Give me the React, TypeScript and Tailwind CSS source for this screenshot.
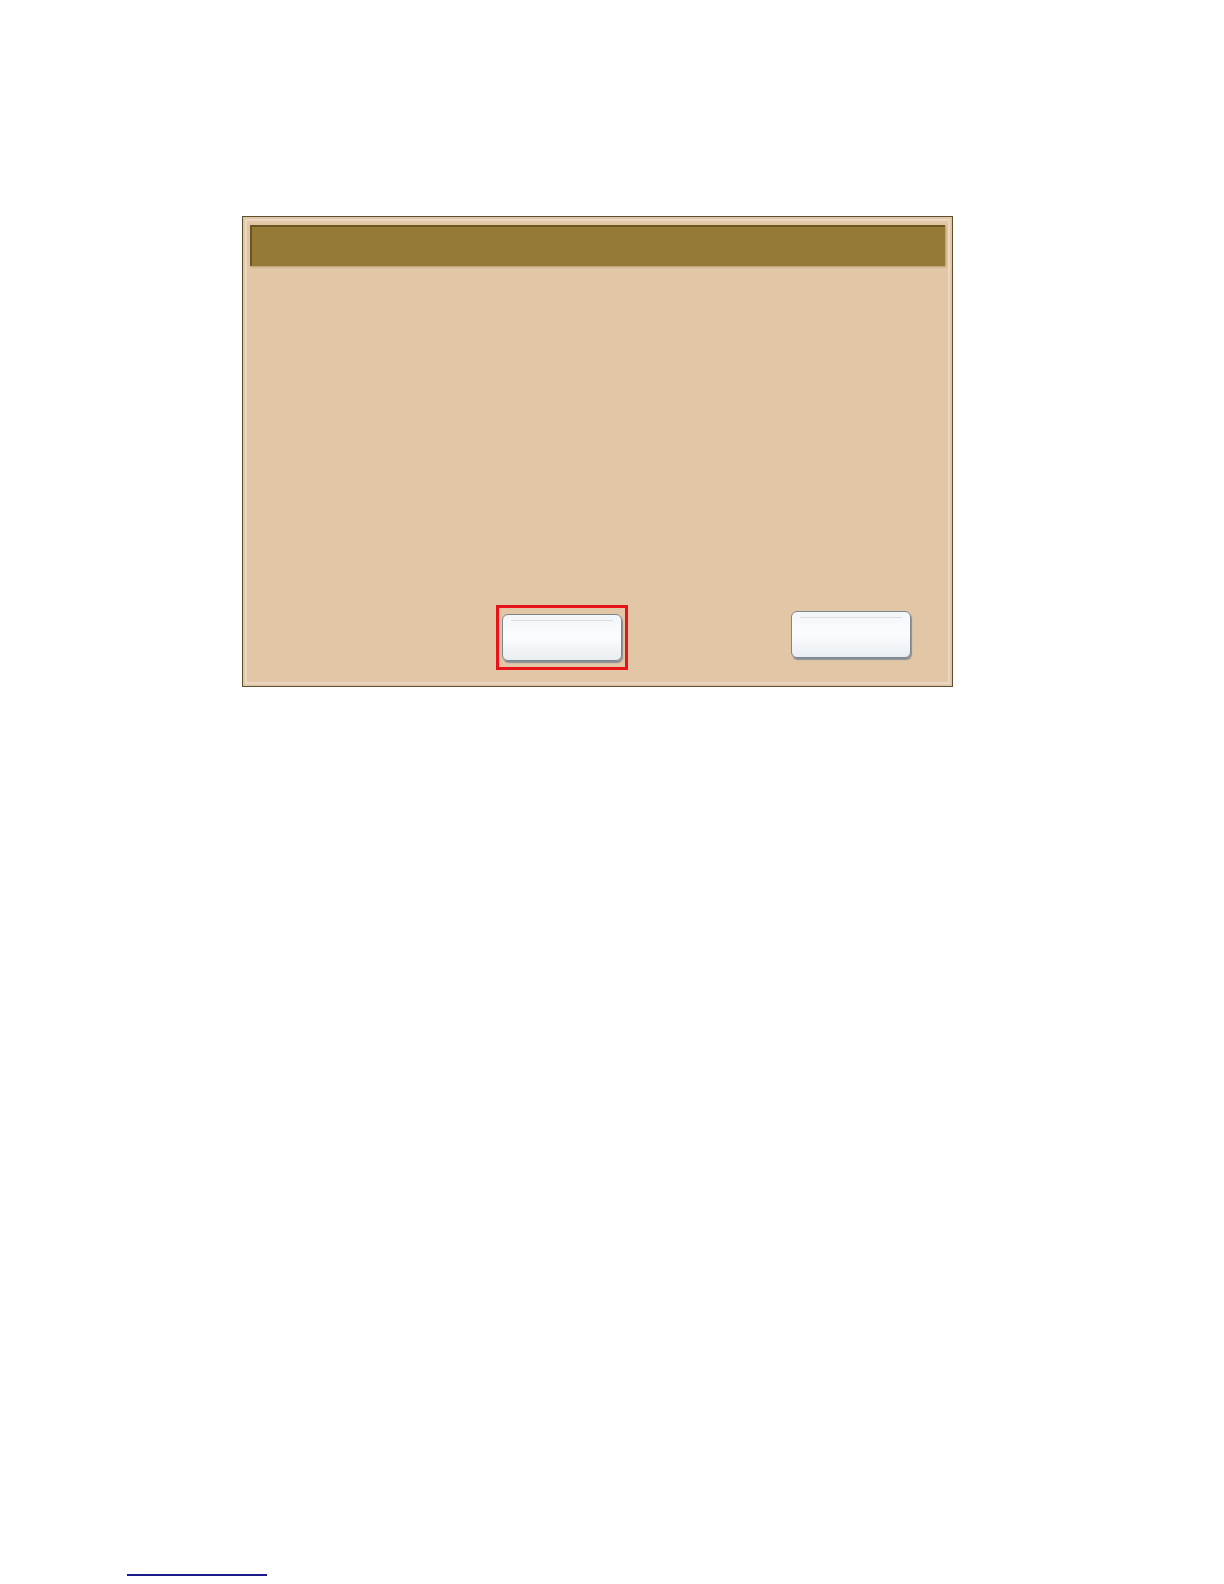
import React from 'react';

const Button = () => (
    <div className="w-[120px] h-[47px] rounded-[6px] border border-[#7d8590] bg-gradient-to-b from-[#f3f6f8] via-[#fbfcfd] to-[#e9eef2] shadow-[1px_2px_1px_#8a8f96] relative">
        <div className="absolute left-[8px] right-[8px] top-[5px] h-px bg-[#d8dee3]" />
    </div>
);

export default function App() {
    return (
        <div className="w-[1224px] h-[1584px] bg-white relative font-['Liberation_Sans',sans-serif]">
            <div className="pt-[216px] pl-[242px]">
                <div className="w-[711px] h-[471px] border border-[#5a5030] bg-[#e1c7a5] p-[2px]">
                    <div className="h-full border-[2px] border-[#eed6c6] flex flex-col">
                        <div className="mt-[4px] mx-[3px] h-[41px] bg-[#957a36] border-t-[2px] border-l-[2px] border-[#6a5420] shadow-[1px_1px_2px_#b09a6a]" />
                        <div className="flex-1" />
                        <div className="flex items-start pb-[12px]">
                            <div className="ml-[249px] border-[3px] border-[#e8141a] p-[3px] pt-[6px] pb-[6px]">
                                <Button />
                            </div>
                            <div className="ml-[163px] mt-[6px]">
                                <Button />
                            </div>
                        </div>
                    </div>
                </div>
            </div>
            <div className="absolute left-[127px] top-[1574px] w-[140px] h-[2px] bg-[#1a1a8c]" />
        </div>
    );
}
